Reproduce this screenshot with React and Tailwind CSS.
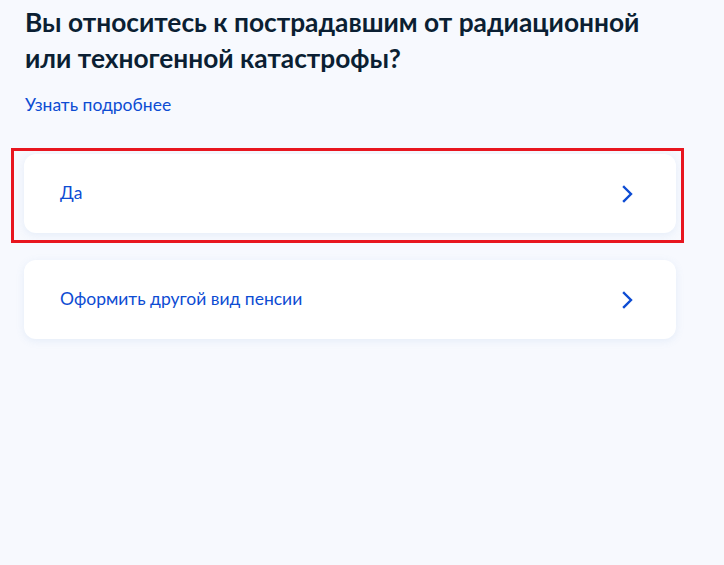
export default function App() {
  const options = ["Да", "Оформить другой вид пенсии"];
  return (
    <div
      className="min-h-[565px] w-full bg-[#f7f9fe] text-[#0b1f33]"
      style={{ fontFamily: "Lato, 'Noto Sans', sans-serif" }}
    >
      <div className="w-[652px] ml-[24px] pt-[4px]">
        <h1 className="text-[26.3px] leading-[36px] font-bold pl-[1px] w-[630px]">
          Вы относитесь к пострадавшим от радиационной или техногенной катастрофы?
        </h1>
        <a href="#" className="block mt-[17px] text-[17.5px] leading-[24px] text-[#0d4cd3] pl-[1px]">
          Узнать подробнее
        </a>
        <div className="mt-[37px] flex flex-col gap-[27px]">
          {options.map((label, i) => (
            <div key={label} className="relative">
              {i === 0 && (
                <div className="absolute left-[-13px] right-[-8px] top-[-6px] bottom-[-10px] border-[3px] border-[#e8161f] pointer-events-none" />
              )}
              <button className="w-full h-[79px] flex items-center justify-between bg-white rounded-[12px] shadow-[0_2px_8px_rgba(102,150,204,0.12)] pl-[36px] pr-[42px] text-left">
                <span className="text-[17.5px] leading-[24px] text-[#0d4cd3] -mt-[2px]">{label}</span>
                <svg width="12" height="18" viewBox="0 0 12 18" fill="none">
                  <path d="M2 2l7 7-7 7" stroke="#0d4cd3" strokeWidth="2.4" strokeLinecap="square" />
                </svg>
              </button>
            </div>
          ))}
        </div>
      </div>
    </div>
  );
}
